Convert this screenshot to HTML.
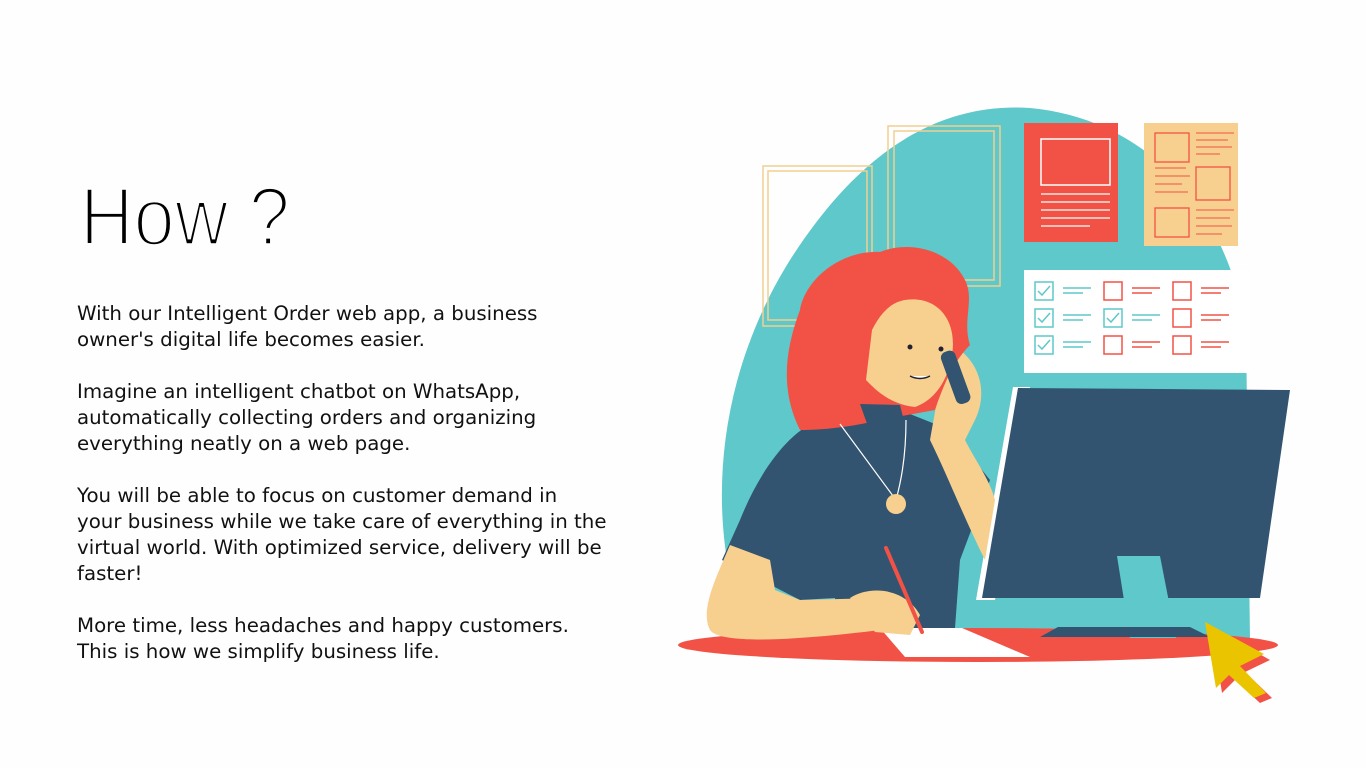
<!DOCTYPE html>
<html><head><meta charset="utf-8"><style>
html,body{margin:0;padding:0;background:#fefefe;}
body{width:1366px;height:768px;position:relative;overflow:hidden;font-family:"Liberation Sans",sans-serif;}
.t{position:absolute;left:77px;top:301px;font-family:"DejaVu Sans",sans-serif;font-size:19.8px;line-height:26px;color:#111;white-space:nowrap;}
.t p{margin:0 0 26px 0;}
svg{position:absolute;left:0;top:0;}
</style></head><body>
<svg width="1366" height="768" viewBox="0 0 1366 768">
<text x="80" y="245" font-size="83" font-family="Liberation Sans" fill="#000" stroke="#fefefe" stroke-width="3.6" textLength="210" lengthAdjust="spacingAndGlyphs">How ?</text>
<path d="M745 630 C705 520 715 380 790 260 C860 150 940 102 1030 108 C1140 118 1225 200 1246 330 L1250 640 Z" fill="#5ec8cb"/>
<g fill="none" stroke="#f2cf8f" stroke-width="1.5">
<rect x="888" y="126" width="112" height="160"/><rect x="894" y="131" width="100" height="149"/>
<rect x="763" y="166" width="109" height="160"/><rect x="768" y="171" width="99" height="149"/>
</g>
<rect x="1024" y="123" width="94" height="119" fill="#f25245"/>
<rect x="1041" y="139" width="69" height="46" fill="none" stroke="#fff" stroke-width="1.5"/>
<g stroke="#fff" stroke-width="1.2"><line x1="1041" y1="194" x2="1110" y2="194"/><line x1="1041" y1="202" x2="1110" y2="202"/><line x1="1041" y1="210" x2="1110" y2="210"/><line x1="1041" y1="218" x2="1110" y2="218"/><line x1="1041" y1="226" x2="1090" y2="226"/></g>
<rect x="1144" y="123" width="94" height="123" fill="#f7d08f"/>
<g fill="none" stroke="#f25245" stroke-width="1.3"><rect x="1155" y="133" width="34" height="29"/><rect x="1196" y="167" width="34" height="33"/><rect x="1155" y="208" width="34" height="29"/></g>
<g stroke="#f25245" stroke-width="1"><line x1="1196" y1="133" x2="1234" y2="133"/><line x1="1196" y1="140" x2="1228" y2="140"/><line x1="1196" y1="147" x2="1232" y2="147"/><line x1="1196" y1="154" x2="1220" y2="154"/><line x1="1155" y1="168" x2="1186" y2="168"/><line x1="1155" y1="176" x2="1190" y2="176"/><line x1="1155" y1="184" x2="1182" y2="184"/><line x1="1155" y1="192" x2="1188" y2="192"/><line x1="1196" y1="210" x2="1234" y2="210"/><line x1="1196" y1="218" x2="1230" y2="218"/><line x1="1196" y1="226" x2="1232" y2="226"/><line x1="1196" y1="234" x2="1222" y2="234"/></g>
<rect x="1024" y="270" width="226" height="103" fill="#fff"/>
<g fill="none" stroke-width="1.5">
<g stroke="#5ec8cb"><rect x="1035" y="282" width="18" height="18"/><rect x="1035" y="309" width="18" height="18"/><rect x="1035" y="336" width="18" height="18"/><rect x="1104" y="309" width="18" height="18"/>
<path d="M1038 291l4 4 8-9M1038 318l4 4 8-9M1038 345l4 4 8-9M1107 318l4 4 8-9"/>
<path d="M1063 288h28M1063 293h20M1063 315h28M1063 320h20M1063 342h28M1063 347h20M1132 315h28M1132 320h20"/></g>
<g stroke="#f25245"><rect x="1104" y="282" width="18" height="18"/><rect x="1104" y="336" width="18" height="18"/><rect x="1173" y="282" width="18" height="18"/><rect x="1173" y="309" width="18" height="18"/><rect x="1173" y="336" width="18" height="18"/>
<path d="M1132 288h28M1132 293h20M1132 342h28M1132 347h20M1201 288h28M1201 293h20M1201 315h28M1201 320h20M1201 342h28M1201 347h20"/></g>
</g>
<ellipse cx="978" cy="645" rx="300" ry="17" fill="#f25245"/>
<polygon points="880,628 962,628 1030,657 905,657" fill="#fff"/>
<polygon points="1013,387 1030,387 995,600 976,600" fill="#fff"/>
<polygon points="1018,388 1290,390 1260,598 982,598" fill="#325470"/>
<polygon points="1117,556 1160,556 1176,638 1130,638" fill="#5ec8cb"/>
<polygon points="1058,627 1190,627 1210,637 1040,637" fill="#325470"/>
<path d="M820 420 C790 430 760 470 740 520 L722 560 L800 600 L835 598 L835 628 L955 628 L960 560 L990 480 L950 430 L905 412 L870 410 Z" fill="#325470"/>
<path d="M730 545 C715 580 700 610 710 630 C720 645 800 640 880 630 L900 612 L880 598 L800 600 L775 590 L770 560 Z" fill="#f7d08f"/>
<path d="M850 598 C870 585 905 588 920 615 L910 635 L875 632 Z" fill="#f7d08f"/>
<line x1="886" y1="548" x2="922" y2="632" stroke="#f25245" stroke-width="4" stroke-linecap="round"/>
<path d="M930 440 C945 470 965 520 985 560 L995 500 C990 480 975 460 965 440 L975 420 C985 400 985 370 960 350 L945 355 Z" fill="#f7d08f"/>
<path d="M800 430 C780 390 785 350 800 310 C805 280 840 250 880 252 C910 240 950 250 965 280 C975 300 962 320 970 345 C955 360 945 380 935 410 L880 420 C860 425 830 430 800 430 Z" fill="#f25245"/>
<path d="M905 300 C935 295 958 318 952 355 C948 380 935 400 915 407 C895 405 880 395 866 380 L872 330 C882 310 893 302 905 300 Z" fill="#f7d08f"/>
<path d="M860 404 L900 405 L905 425 L870 432 Z" fill="#325470"/>
<rect x="948" y="350" width="15" height="55" rx="6" fill="#325470" transform="rotate(-20 955 377)"/>
<circle cx="910" cy="347" r="2.5" fill="#223"/><circle cx="941" cy="349" r="2.5" fill="#223"/>
<path d="M910 376 q10 5 20 0" stroke="#223" stroke-width="1.5" fill="#fff"/>
<path d="M840 424 L896 500 M906 420 C906 460 900 485 896 500" stroke="#fff" stroke-width="1.2" fill="none"/>
<circle cx="896" cy="504" r="10" fill="#f7d08f"/>
<polygon points="1212,627 1270,660 1245,672 1272,698 1260,703 1235,680 1222,693" fill="#f25245"/>
<polygon points="1205,622 1264,654 1240,666 1266,693 1254,698 1229,675 1216,688" fill="#ebc400"/>
</svg>
<div class="t">
<p>With our Intelligent Order web app, a business<br>owner's digital life becomes easier.</p>
<p>Imagine an intelligent chatbot on WhatsApp,<br>automatically collecting orders and organizing<br>everything neatly on a web page.</p>
<p>You will be able to focus on customer demand in<br>your business while we take care of everything in the<br>virtual world. With optimized service, delivery will be<br>faster!</p>
<p>More time, less headaches and happy customers.<br>This is how we simplify business life.</p>
</div>
</body></html>
